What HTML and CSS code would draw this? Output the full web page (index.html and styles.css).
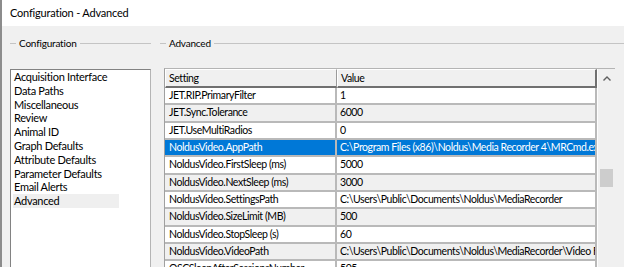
FILE: index.html
```html
<!DOCTYPE html>
<html lang="en">
<head>
  <meta charset="UTF-8" />
  <title>Configuration - Advanced</title>
  <link rel="stylesheet" href="styles.css">
</head>
<body>

  <div class="titlebar">Configuration - Advanced</div>

  <div class="main">
    <section class="group group-config">
      <div class="group-head"><span class="lead"></span><span class="label">Configuration</span><span class="rule"></span></div>
      <ul class="nav-list">
        <li>Acquisition Interface</li>
        <li>Data Paths</li>
        <li>Miscellaneous</li>
        <li>Review</li>
        <li>Animal ID</li>
        <li>Graph Defaults</li>
        <li>Attribute Defaults</li>
        <li>Parameter Defaults</li>
        <li>Email Alerts</li>
        <li class="current">Advanced</li>
      </ul>
    </section>

    <section class="group group-adv">
      <div class="group-head"><span class="lead"></span><span class="label">Advanced</span><span class="rule"></span></div>
      <div class="grid">
        <table class="props">
          <colgroup><col class="col-name"><col></colgroup>
          <thead>
            <tr><th>Setting</th><th>Value</th></tr>
          </thead>
          <tbody>
            <tr><td>JET.RIP.PrimaryFilter</td><td>1</td></tr>
            <tr class="alt"><td>JET.Sync.Tolerance</td><td>6000</td></tr>
            <tr><td>JET.UseMultiRadios</td><td>0</td></tr>
            <tr class="selected"><td>NoldusVideo.AppPath</td><td>C:\Program Files (x86)\Noldus\Media Recorder 4\MRCmd.exe</td></tr>
            <tr><td>NoldusVideo.FirstSleep (ms)</td><td>5000</td></tr>
            <tr class="alt"><td>NoldusVideo.NextSleep (ms)</td><td>3000</td></tr>
            <tr><td>NoldusVideo.SettingsPath</td><td>C:\Users\Public\Documents\Noldus\MediaRecorder</td></tr>
            <tr class="alt"><td>NoldusVideo.SizeLimit (MB)</td><td>500</td></tr>
            <tr><td>NoldusVideo.StopSleep (s)</td><td>60</td></tr>
            <tr class="alt"><td>NoldusVideo.VideoPath</td><td>C:\Users\Public\Documents\Noldus\MediaRecorder\Video Files</td></tr>
            <tr><td>OSCSleepAfterSessionsNumber</td><td>505</td></tr>
          </tbody>
        </table>
        <div class="vscroll">
          <div class="arrow">
            <svg width="8" height="5" viewBox="0 0 8 5"><polyline points="0.5,4.5 4,1 7.5,4.5" fill="none" stroke="#606060" stroke-width="1.4"/></svg>
          </div>
          <div class="thumb"></div>
        </div>
      </div>
    </section>
  </div>

</body>
</html>
```

FILE: styles.css
```css
* {
  margin: 0; padding: 0; box-sizing: border-box;
  font-family: 'Lato', 'Liberation Sans', sans-serif;
}
body {
  width: 624px;
  height: 267px;
  overflow: hidden;
  background: #f0f0f0;
  color: #000;
  font-size: 11px;
  border-left: 2px solid #8c8c8c;
}
.titlebar {
  height: 26px;
  background: #fff;
  padding-left: 8px;
  line-height: 26px;
  font-size: 11px;
  letter-spacing: -0.2px;
}
.main {
  display: flex;
  padding: 10px 0 0 8px;
}
.group-head {
  display: flex;
  align-items: center;
  height: 14px;
}
.group-head .lead {
  width: 6px;
  border-top: 1px solid #c4c4c4;
}
.group-head .label {
  padding: 0 3px;
  line-height: 14px;
  font-size: 10px;
  letter-spacing: -0.2px;
}
.group-head .rule {
  flex: 1;
  border-top: 1px solid #c4c4c4;
}
.group-config {
  width: 142px;
}
.nav-list {
  list-style: none;
  margin-top: 19px;
  height: 220px;
  background: #fff;
  border: 1px solid #828282;
  border-right-color: #b4b4b4;
  padding: 0 0 0 2px;
  letter-spacing: -0.3px;
}
.nav-list li {
  height: 13.8px;
  line-height: 13.8px;
  padding-left: 1px;
  width: 106px;
  white-space: nowrap;
}
.nav-list li.current {
  background: #efefef;
}
.group-adv {
  flex: 1;
  margin-left: 9px;
}
.grid {
  display: flex;
  margin: 18px 9px 0 4px;
  border-top: 1px solid #b4b4b4;
  border-left: 1px solid #a0a0a0;
}
.props {
  width: 432px;
  table-layout: fixed;
  border-collapse: separate;
  border-spacing: 0;
  font-size: 10.5px;
  letter-spacing: -0.42px;
}
.col-name {
  width: 172px;
}
.props th {
  height: 19px;
  text-align: left;
  font-weight: normal;
  padding: 0 3px;
  background: #f0f0f0;
  border-bottom: 2px solid #707070;
  border-right: 1px solid #9a9a9a;
  border-left: 1px solid #fff;
  border-top: 1px solid #fff;
}
.props th:last-child {
  border-right: 2px solid #707070;
}
.props td {
  height: 17.33px;
  line-height: 15px;
  padding: 0 3px;
  white-space: nowrap;
  overflow: hidden;
  background: #fff;
  border-right: 2px solid #b9b9b9;
  border-bottom: 2px solid #b9b9b9;
}
.props td:first-child {
  padding-left: 4px;
}
.props tr.alt td {
  background: #f0f0f0;
}
.props tr.selected td {
  background: #0078d7;
  color: #fff;
}
.vscroll {
  width: 18px;
  display: flex;
  flex-direction: column;
  align-items: center;
  background: #f0f0f0;
  border-left: 1px solid #fdfdfd;
}
.vscroll .arrow {
  height: 18px;
  display: flex;
  align-items: center;
  justify-content: center;
}
.vscroll .thumb {
  width: 13px;
  height: 18px;
  margin-top: 82px;
  background: #cdcdcd;
}
```
